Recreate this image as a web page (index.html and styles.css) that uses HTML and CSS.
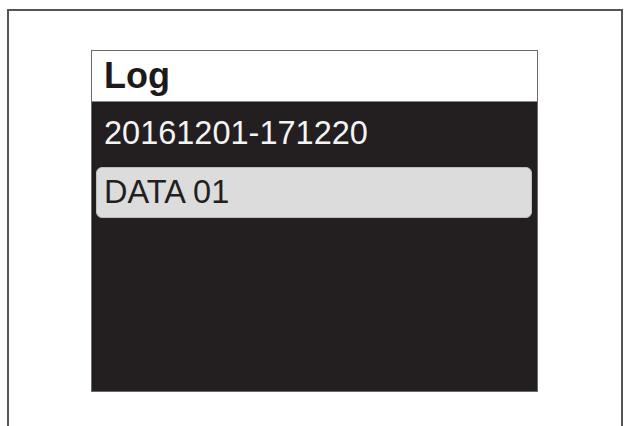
FILE: index.html
```html
<!DOCTYPE html>
<html>
<head>
<meta charset="utf-8">
<link rel="stylesheet" href="styles.css">
</head>
<body>
<div class="frame">
  <div class="panel">
    <div class="header">Log</div>
    <div class="row">20161201-171220</div>
    <div class="row selected">DATA 01</div>
  </div>
</div>
</body>
</html>
```
FILE: styles.css
```css
html, body {
  margin: 0;
  padding: 0;
  background: #ffffff;
}
body {
  width: 624px;
  height: 426px;
  overflow: hidden;
  font-family: "Liberation Sans", Arial, sans-serif;
}
.frame {
  margin: 9px 1px 0 7px;
  height: 417px;
  border: 2px solid #555555;
  border-bottom: none;
  padding: 39px 0 0 82px;
  box-sizing: border-box;
}
.panel {
  width: 447px;
  height: 342px;
  box-sizing: border-box;
  background: #231f20;
  border: 1px solid #6a6a6a;
  display: flex;
  flex-direction: column;
}
.header {
  background: #ffffff;
  height: 51px;
  box-sizing: border-box;
  border-bottom: 1px solid #8a8a8a;
  line-height: 50px;
  font-size: 36px;
  font-weight: bold;
  color: #1c1a1a;
  padding-left: 12px;
}
.row {
  color: #f4f4f4;
  font-size: 32.5px;
  line-height: 51px;
  padding: 6px 0 0 12px;
  margin-bottom: 8px;
}
.row.selected {
  background: #dcdcdc;
  color: #231f20;
  border: 1px solid #bdbdbd;
  border-radius: 6px;
  margin: 0 5px 0 4px;
  padding: 0 0 0 7px;
  line-height: 49px;
}
```
